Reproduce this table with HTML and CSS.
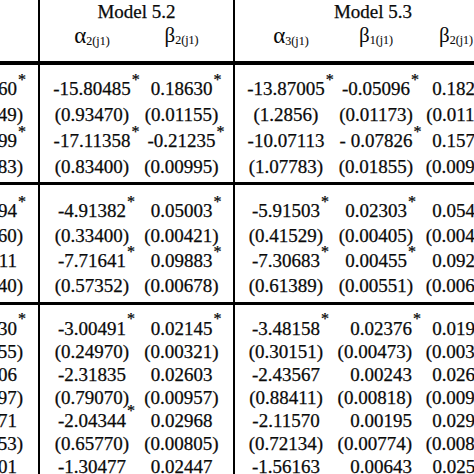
FILE: index.html
```html
<!DOCTYPE html>
<html>
<head>
<meta charset="utf-8">
<link rel="stylesheet" href="styles.css">
</head>
<body>
<div class="page">
  <div class="table">
    <div class="band head">
      <div class="c0 rb"></div>
      <div class="m52 rb">Model 5.2</div>
      <div class="m53">Model 5.3</div>
      <div class="lab"><span class="sym a">α</span><span class="sub">2(j1)</span></div>
      <div class="lab c2 rb"><span class="sym">β</span><span class="sub">2(j1)</span></div>
      <div class="lab c3"><span class="sym a">α</span><span class="sub">3(j1)</span></div>
      <div class="lab"><span class="sym">β</span><span class="sub">1(j1)</span></div>
      <div class="lab c5"><span class="sym">β</span><span class="sub">2(j1)</span></div>
    </div>

    <div class="band s1">
      <div class="col c0 rb">
        <div class="v">-14.52760<span class="st">*</span></div>
        <div class="e">(0.85349)</div>
        <div class="v">-16.37299<span class="st">*</span></div>
        <div class="e">(0.81083)</div>
      </div>
      <div class="col c1">
        <div>-15.80485<span class="st">*</span></div>
        <div>(0.93470)</div>
        <div>-17.11358<span class="st">*</span></div>
        <div>(0.83400)</div>
      </div>
      <div class="col c2 rb">
        <div>0.18630<span class="st">*</span></div>
        <div>(0.01155)</div>
        <div>-0.21235<span class="st">*</span></div>
        <div>(0.00995)</div>
      </div>
      <div class="col c3">
        <div>-13.87005<span class="st">*</span></div>
        <div>(1.2856)</div>
        <div>-10.07113</div>
        <div>(1.07783)</div>
      </div>
      <div class="col c4">
        <div>-0.05096<span class="st">*</span></div>
        <div>(0.01173)</div>
        <div>- 0.07826<span class="st">*</span></div>
        <div>(0.01855)</div>
      </div>
      <div class="col c5">
        <div>0.18264</div>
        <div>(0.01134)</div>
        <div>0.15702</div>
        <div>(0.00921)</div>
      </div>
    </div>

    <div class="band s2">
      <div class="col c0 rb">
        <div class="v">-5.12094<span class="st">*</span></div>
        <div class="e">(0.34660)</div>
        <div class="v">-7.24611</div>
        <div class="e">(0.56140)</div>
      </div>
      <div class="col c1">
        <div>-4.91382<span class="st">*</span></div>
        <div>(0.33400)</div>
        <div>-7.71641<span class="st">*</span></div>
        <div>(0.57352)</div>
      </div>
      <div class="col c2 rb">
        <div>0.05003<span class="st">*</span></div>
        <div>(0.00421)</div>
        <div>0.09883<span class="st">*</span></div>
        <div>(0.00678)</div>
      </div>
      <div class="col c3">
        <div>-5.91503<span class="st">*</span></div>
        <div>(0.41529)</div>
        <div>-7.30683<span class="st">*</span></div>
        <div>(0.61389)</div>
      </div>
      <div class="col c4">
        <div>0.02303<span class="st">*</span></div>
        <div>(0.00405)</div>
        <div>0.00455<span class="st">*</span></div>
        <div>(0.00551)</div>
      </div>
      <div class="col c5">
        <div>0.05441</div>
        <div>(0.00413)</div>
        <div>0.09246</div>
        <div>(0.00667)</div>
      </div>
    </div>

    <div class="band s3">
      <div class="col c0 rb">
        <div class="v">-2.98730<span class="st">*</span></div>
        <div class="e">(0.23655)</div>
        <div class="v">-2.20106</div>
        <div class="e">(0.75597)</div>
        <div class="v">-2.01471</div>
        <div class="e">(0.63653)</div>
        <div class="v">-1.29301</div>
      </div>
      <div class="col c1">
        <div>-3.00491<span class="st">*</span></div>
        <div>(0.24970)</div>
        <div>-2.31835</div>
        <div>(0.79070)</div>
        <div>-2.04344<span class="st">*</span></div>
        <div>(0.65770)</div>
        <div>-1.30477</div>
      </div>
      <div class="col c2 rb">
        <div>0.02145<span class="st">*</span></div>
        <div>(0.00321)</div>
        <div>0.02603</div>
        <div>(0.00957)</div>
        <div>0.02968</div>
        <div>(0.00805)</div>
        <div>0.02447</div>
      </div>
      <div class="col c3">
        <div>-3.48158<span class="st">*</span></div>
        <div>(0.30151)</div>
        <div>-2.43567</div>
        <div>(0.88411)</div>
        <div>-2.11570</div>
        <div>(0.72134)</div>
        <div>-1.56163</div>
      </div>
      <div class="col c4">
        <div>0.02376<span class="st">*</span></div>
        <div>(0.00473)</div>
        <div>0.00243</div>
        <div>(0.00818)</div>
        <div>0.00195</div>
        <div>(0.00774)</div>
        <div>0.00643</div>
      </div>
      <div class="col c5">
        <div>0.01913<span class="st">*</span></div>
        <div>(0.00302)</div>
        <div>0.02605</div>
        <div>(0.00970)</div>
        <div>0.02902</div>
        <div>(0.00805)</div>
        <div>0.02511</div>
      </div>
    </div>
  </div>
</div>
</body>
</html>
```

FILE: styles.css
```css
html, body {
  margin: 0;
  padding: 0;
  background: #fff;
  overflow: hidden;
}
body {
  font-family: "Liberation Serif", "Times New Roman", serif;
  font-size: 19px;
  color: #0a0a0a;
  -webkit-text-stroke: 0.25px #0a0a0a;
}
.page {
  width: 474px;
  height: 474px;
  overflow: hidden;
}
.table {
  width: 511px;
}
.band {
  display: grid;
  grid-template-columns: 40px 104px 91px 102px 78px 96px;
  white-space: nowrap;
}
.rb {
  border-right: 2px solid #000;
}

/* header */
.head {
  grid-template-rows: 24px 37px;
  border-bottom: 4px solid #000;
  line-height: 24px;
  text-align: center;
}
.head .c0 {
  grid-row: 1 / 3;
}
.m52 {
  grid-column: 2 / 4;
}
.m53 {
  grid-column: 4 / 7;
}
.sym {
  font-size: 21px;
  line-height: 1;
  -webkit-text-stroke: 0;
}
.sym.a {
  font-size: 23px;
}
.sub {
  font-size: 12px;
  line-height: 1;
  vertical-align: -2px;
  -webkit-text-stroke: 0.1px #0a0a0a;
}
.head .c3 {
  padding-left: 10px;
}
.head .c5 {
  padding-right: 14px;
}

/* data columns */
.col {
  text-align: center;
}
.c2 {
  padding-right: 14px;
}
.c0 {
  text-align: right;
}
.c0 .v,
.c0 .e {
  margin-left: -70px;
}
.c0 .v {
  padding-right: 21px;
}
.c0 .e {
  padding-right: 15px;
}
.st {
  font-size: 16px;
  line-height: 0;
  vertical-align: 10px;
  margin-left: 1px;
  margin-right: -9px;
}

.s1 {
  border-bottom: 3px solid #000;
}
.s1 .col {
  padding-top: 11px;
  padding-bottom: 2px;
  line-height: 26px;
}
.s2 {
  border-bottom: 3px solid #000;
}
.s2 .col {
  padding-top: 13px;
  padding-bottom: 4px;
  line-height: 25px;
}
.s3 .col {
  padding-top: 12px;
  line-height: 23px;
}
.s3 .st {
  vertical-align: 11px;
}
.s3 .c4 {
  text-align: right;
  padding-right: 3px;
}
```
